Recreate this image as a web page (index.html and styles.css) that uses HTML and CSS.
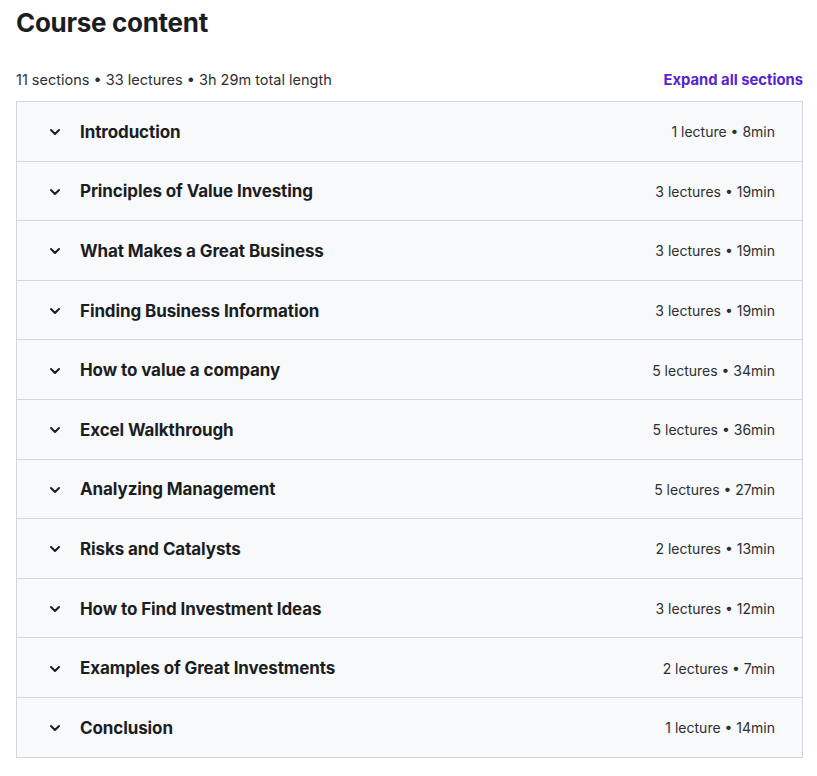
FILE: index.html
```html
<!DOCTYPE html>
<html lang="en">
<head>
    <meta charset="UTF-8">
    <title>Course content</title>
    <link rel="stylesheet" href="styles.css">
</head>
<body>
    <div class="curriculum">
        <h2>Course content</h2>
        <div class="summary">
            <span>11 sections • 33 lectures • 3h 29m total length</span>
            <button class="expand">Expand all sections</button>
        </div>
        <div class="sections">
            <div class="section"><svg class="chev" viewBox="0 0 10 6"><path d="M1 1L5 5L9 1"/></svg><span class="title">Introduction</span><span class="info">1 lecture • 8min</span></div>
            <div class="section"><svg class="chev" viewBox="0 0 10 6"><path d="M1 1L5 5L9 1"/></svg><span class="title">Principles of Value Investing</span><span class="info">3 lectures • 19min</span></div>
            <div class="section"><svg class="chev" viewBox="0 0 10 6"><path d="M1 1L5 5L9 1"/></svg><span class="title">What Makes a Great Business</span><span class="info">3 lectures • 19min</span></div>
            <div class="section"><svg class="chev" viewBox="0 0 10 6"><path d="M1 1L5 5L9 1"/></svg><span class="title">Finding Business Information</span><span class="info">3 lectures • 19min</span></div>
            <div class="section"><svg class="chev" viewBox="0 0 10 6"><path d="M1 1L5 5L9 1"/></svg><span class="title">How to value a company</span><span class="info">5 lectures • 34min</span></div>
            <div class="section"><svg class="chev" viewBox="0 0 10 6"><path d="M1 1L5 5L9 1"/></svg><span class="title">Excel Walkthrough</span><span class="info">5 lectures • 36min</span></div>
            <div class="section"><svg class="chev" viewBox="0 0 10 6"><path d="M1 1L5 5L9 1"/></svg><span class="title">Analyzing Management</span><span class="info">5 lectures • 27min</span></div>
            <div class="section"><svg class="chev" viewBox="0 0 10 6"><path d="M1 1L5 5L9 1"/></svg><span class="title">Risks and Catalysts</span><span class="info">2 lectures • 13min</span></div>
            <div class="section"><svg class="chev" viewBox="0 0 10 6"><path d="M1 1L5 5L9 1"/></svg><span class="title">How to Find Investment Ideas</span><span class="info">3 lectures • 12min</span></div>
            <div class="section"><svg class="chev" viewBox="0 0 10 6"><path d="M1 1L5 5L9 1"/></svg><span class="title">Examples of Great Investments</span><span class="info">2 lectures • 7min</span></div>
            <div class="section"><svg class="chev" viewBox="0 0 10 6"><path d="M1 1L5 5L9 1"/></svg><span class="title">Conclusion</span><span class="info">1 lecture • 14min</span></div>
        </div>
    </div>
</body>
</html>
```

FILE: styles.css
```css
body {
    margin: 0;
    padding: 0 14px 0 16px;
    font-family: Inter, "Noto Sans", Arial, sans-serif;
    color: #1c1d1f;
    background: white;
}
h2 {
    font-size: 26px;
    font-weight: 700;
    margin: 0;
    padding-top: 6px;
    line-height: 34px;
    letter-spacing: -0.3px;
}
.summary {
    display: flex;
    justify-content: space-between;
    align-items: center;
    margin-top: 29px;
    margin-bottom: 10px;
    font-size: 14.5px;
    line-height: 22px;
    color: #2d2f31;
}
.expand {
    background: none;
    border: none;
    padding: 0;
    font-family: inherit;
    font-size: 14.8px;
    font-weight: 700;
    color: #5624d0;
    cursor: pointer;
}
.sections {
    border: 1px solid #d1d7dc;
    border-bottom: none;
}
.section {
    display: flex;
    align-items: center;
    height: 58.6px;
    padding: 1px 27px 0 33px;
    box-sizing: border-box;
    height: 59.6px;
    background: #f7f9fa;
    border-bottom: 1px solid #d1d7dc;
}
.chev {
    width: 10px;
    height: 6px;
    margin-right: 20px;
    margin-top: 1px;
    overflow: visible;
    fill: none;
    stroke: #1c1d1f;
    stroke-width: 2;
    stroke-linecap: round;
    stroke-linejoin: round;
}
.title {
    flex: 1;
    font-size: 17px;
    font-weight: 700;
    letter-spacing: -0.1px;
}
.info {
    font-size: 14px;
    color: #2d2f31;
}
```
